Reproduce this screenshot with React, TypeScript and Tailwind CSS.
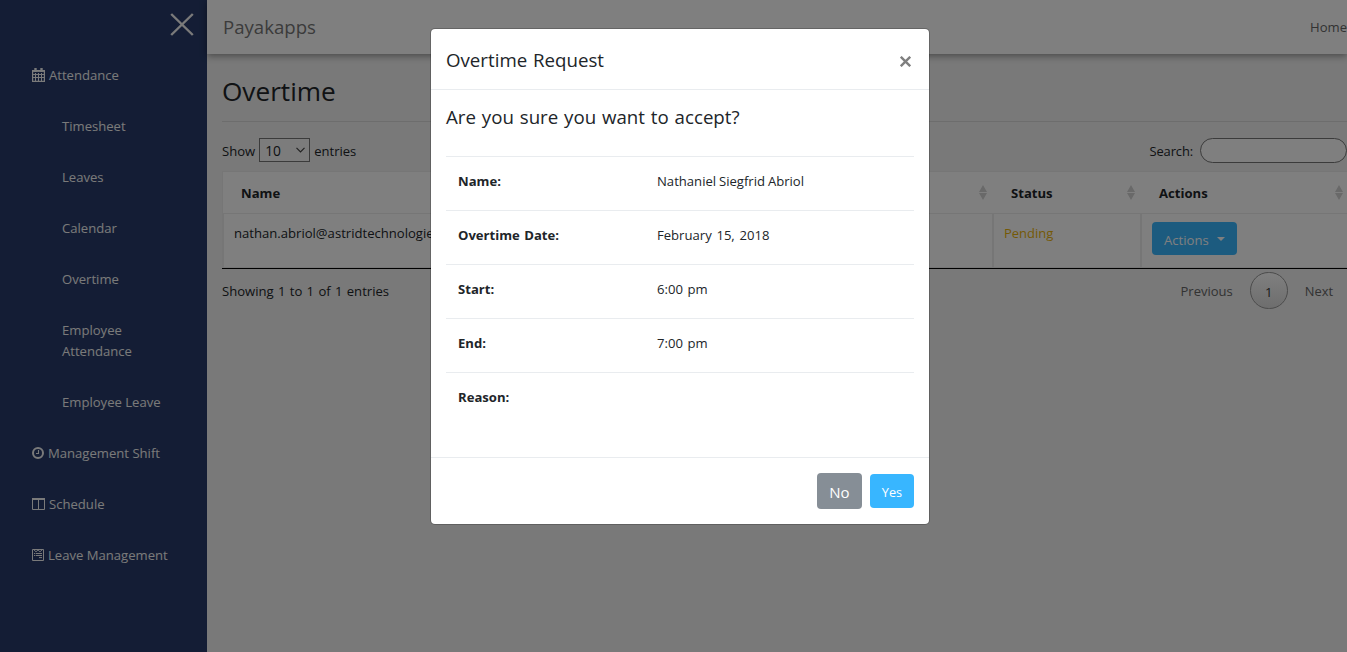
import React from 'react';

type IconProps = { className?: string };

const CalendarIcon = ({ className }: IconProps) => (
  <svg className={className} width="13" height="14" viewBox="0 0 13 14" fill="none" stroke="currentColor">
    <path d="M.6 2.5h11.8v10.9H.6z" strokeWidth="1.2" />
    <path d="M1 3.4h11M1 6.5h11M1 9.5h11M3.5 5v8M6.5 5v8M9.5 5v8" />
    <path d="M3.5 0v4M9.5 0v4" strokeWidth="2.4" />
  </svg>
);

const ClockIcon = ({ className }: IconProps) => (
  <svg className={className} width="12" height="12" viewBox="0 0 12 12" fill="none" stroke="currentColor">
    <circle cx="6" cy="6" r="5" strokeWidth="2" />
    <path d="M6.5 3v3.5H4" strokeWidth="1.1" />
  </svg>
);

const ColumnsIcon = ({ className }: IconProps) => (
  <svg className={className} width="13" height="12" viewBox="0 0 13 12" fill="none" stroke="currentColor">
    <path d="M.5 1h12v10.5H.5zM6.5 1v10.5" />
    <path d="M0 1h13" strokeWidth="2" />
  </svg>
);

const FormIcon = ({ className }: IconProps) => (
  <svg className={className} width="12" height="12" viewBox="0 0 12 12" fill="none" stroke="currentColor">
    <path d="M.5.5h11v11H.5z" />
    <path d="M2 1l2 1.8L6 1l2 1.8L10 1" strokeWidth=".9" />
    <path d="M2 4.5h1.3M4 4.5h6M2 6.5h1.3M4 6.5h6M7 8.6h3" />
  </svg>
);

const SortIcon = () => (
  <svg width="8" height="15" viewBox="0 0 8 15" fill="#d3d3d3">
    <path d="M4 0l4 7H0zM4 15l4-7H0z" />
  </svg>
);

const subItems = ['Timesheet', 'Leaves', 'Calendar', 'Overtime', 'Employee Attendance', 'Employee Leave'];

const details = [
  ['Name:', 'Nathaniel Siegfrid Abriol'],
  ['Overtime Date:', 'February 15, 2018'],
  ['Start:', '6:00 pm'],
  ['End:', '7:00 pm'],
  ['Reason:', ''],
];

function NavItem({ icon, label }: { icon: React.ReactNode; label: string }) {
  return (
    <li className="flex items-center gap-1 py-[15px] pl-8">
      <span className="-mt-px">{icon}</span>
      <span>{label}</span>
    </li>
  );
}

function Sidebar() {
  return (
    <aside className="w-[207px] shrink-0 bg-[#283b6a] text-[#f4f4f4]">
      <div className="flex h-[50px] justify-end pr-[13px] pt-[13px]">
        <svg width="24" height="23" viewBox="0 0 24 23" stroke="currentColor" strokeWidth="2.4">
          <path d="M1.2 1l21.6 21M22.8 1L1.2 22" />
        </svg>
      </div>
      <ul className="text-[13.1px] leading-[21px]">
        <NavItem icon={<CalendarIcon />} label="Attendance" />
        {subItems.map((s) => (
          <li key={s} className="w-[170px] py-[15px] pl-[62px]">
            {s}
          </li>
        ))}
        <NavItem icon={<ClockIcon />} label="Management Shift" />
        <NavItem icon={<ColumnsIcon />} label="Schedule" />
        <NavItem icon={<FormIcon />} label="Leave Management" />
      </ul>
    </aside>
  );
}

function HeadCell({ label }: { label: string }) {
  return (
    <div className="flex items-center justify-between pl-[18px] pr-[5px]">
      <span className="pt-[2px]">{label}</span>
      <SortIcon />
    </div>
  );
}

function Page() {
  return (
    <main className="flex min-w-0 flex-1 flex-col bg-[#f2f2f2]">
      <header className="flex h-[54px] shrink-0 items-center justify-between bg-white pl-4 shadow-[0_2px_7px_rgba(0,0,0,0.4)]">
        <span className="pb-[2px] text-[18.6px] text-[#777]">Payakapps</span>
        <span className="text-[13.1px] text-[#666]">Home</span>
      </header>
      <div className="pl-[15px]">
        <h1 className="flex h-[67px] items-center pt-[7px] text-[26.2px]">Overtime</h1>
        <div className="border-t border-[#dadada]" />
        <div className="mt-4 flex h-[25px] items-center justify-between">
          <div className="flex items-center gap-1">
            <span className="pt-[2px]">Show</span>
            <div className="mb-px flex h-6 w-[51px] items-center justify-between border border-[#777] bg-[#f8f8f8] pl-[5px] pr-1">
              <span className="pt-px text-[13.8px]">10</span>
              <svg width="9" height="6" viewBox="0 0 9 6" fill="none" stroke="#444" strokeWidth="1.2">
                <path d="M.5.8l4 4 4-4" />
              </svg>
            </div>
            <span className="pt-[2px] text-[13px]">entries</span>
          </div>
          <div className="flex items-center gap-[7px]">
            <span className="pt-[2px] text-[12.9px] tracking-[-0.1px]">Search:</span>
            <div className="h-[25px] w-[147px] rounded-full border border-[#777] bg-white" />
          </div>
        </div>
        <div className="mt-2 border-b border-black bg-white">
          <div className="grid h-[43px] grid-cols-[769px_148px_1fr] border-y border-l border-[#ececec] font-bold">
            <HeadCell label="Name" />
            <div className="grid pl-px">
              <HeadCell label="Status" />
            </div>
            <div className="-mr-px grid pl-px">
              <HeadCell label="Actions" />
            </div>
          </div>
          <div className="grid h-[54px] grid-cols-[770px_148px_1fr] border-b border-l-2 border-[#ececec]">
            <div className="border-r-2 border-[#ececec] pl-[10px] pt-[9px]">
              <div className="w-[198px] overflow-hidden">nathan.abriol@astridtechnologie</div>
            </div>
            <div className="border-r-2 border-[#ececec] pl-[10px] pt-[9px] text-[13px] text-[#ebb30c]">Pending</div>
            <div className="pl-[10px] pt-2">
              <div className="flex h-[33px] w-[85px] items-center gap-[8px] rounded bg-[#38b6ff] pl-3 pt-[3px] text-white">
                <span>Actions</span>
                <svg width="8" height="4" viewBox="0 0 8 4" fill="currentColor" className="-mt-[3px]">
                  <path d="M0 0h8L4 4z" />
                </svg>
              </div>
            </div>
          </div>
        </div>
        <div className="flex h-11 items-center justify-between">
          <span className="[word-spacing:0.9px]">Showing 1 to 1 of 1 entries</span>
          <div className="flex items-center pr-[14px] text-[#666]">
            <span className="pt-px text-[13px]">Previous</span>
            <span className="-mt-px ml-[17px] mr-[17px] flex h-[37px] w-[38px] items-center justify-center rounded-full border border-[#979797] bg-gradient-to-b from-white to-[#dcdcdc] pt-[3px] text-[#333]">
              1
            </span>
            <span className="pt-px text-[12.9px]">Next</span>
          </div>
        </div>
      </div>
    </main>
  );
}

function Modal() {
  return (
    <div className="absolute inset-0 bg-black/50 pl-[430px] pt-7">
      <section className="flex h-[497px] w-[500px] flex-col rounded-[5px] border border-black/20 bg-white bg-clip-padding">
        <header className="flex h-[61px] shrink-0 items-center justify-between border-b border-[#e9ecef] pl-[15px] pr-[18px]">
          <h2 className="text-[18.7px] [word-spacing:1px]">Overtime Request</h2>
          <svg className="mt-[5px]" width="11" height="11" viewBox="0 0 11 11" stroke="#7f7f7f" strokeWidth="2.4">
            <path d="M.8.8l9.4 9.4M10.2.8L.8 10.2" />
          </svg>
        </header>
        <div className="flex-1 px-[15px]">
          <p className="flex h-[66px] items-center pb-[13px] text-[18.7px] [word-spacing:1px]">Are you sure you want to accept?</p>
          {details.map(([k, v], i) => (
            <div key={k} className="grid h-[54px] grid-cols-[199px_1fr] border-t border-[#e9ecef] px-3 pt-[14px]">
              <span className="font-bold [word-spacing:1px]">{k}</span>
              <span className={i === 0 ? '[word-spacing:-0.5px]' : '[word-spacing:1.3px]'}>{v}</span>
            </div>
          ))}
        </div>
        <footer className="flex h-[67px] shrink-0 items-center justify-end gap-2 border-t border-[#e9ecef] pr-[15px] text-white">
          <button className="h-9 w-[45px] rounded bg-[#868e96] pt-[3px] text-[15px]">No</button>
          <button className="h-[34px] w-11 rounded bg-[#38b6ff] pt-[2px] text-[12.7px]">Yes</button>
        </footer>
      </section>
    </div>
  );
}

export default function App() {
  return (
    <div className="relative flex h-[652px] w-[1347px] overflow-hidden font-['Open_Sans',sans-serif] text-[13.1px] leading-[21px] text-[#212529]">
      <Sidebar />
      <Page />
      <Modal />
    </div>
  );
}
